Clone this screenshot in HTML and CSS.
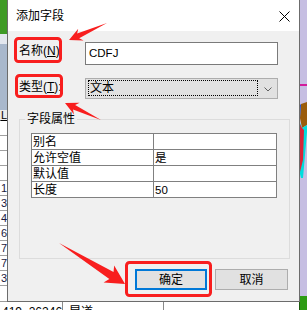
FILE: index.html
```html
<!DOCTYPE html>
<html lang="zh-CN">
<head>
<meta charset="utf-8">
<title>添加字段</title>
<link rel="stylesheet" href="styles.css">
</head>
<body>
<div class="desktop">
  <div class="left-sheet">
    <div class="ls-green"></div>
    <div class="ls-light"></div>
    <div class="ls-blue"></div>
    <div class="ls-head">L</div>
    <div class="ls-row"></div>
    <div class="ls-row"></div>
    <div class="ls-row"></div>
    <div class="ls-row"></div>
    <div class="ls-row">1:</div>
    <div class="ls-row">3</div>
    <div class="ls-row">4</div>
    <div class="ls-row">6</div>
    <div class="ls-row">7</div>
    <div class="ls-row">7</div>
    <div class="ls-row">3</div>
  </div>

  <svg class="right-strip" width="8" height="310" viewBox="0 0 8 310">
    <rect x="0" y="0" width="8" height="310" fill="#c6bee2"/>
    <rect x="0" y="84" width="8" height="2" fill="#d21c9c"/>
    <polygon points="2,104 8,102 8,125 3,128 1,118" fill="#9a5c0c"/>
    <polygon points="0,106 2,104 1,118 0,120" fill="#1c4fd0"/>
    <polygon points="0,120 3,128 8,125 8,132 4,178 2,178 0,170" fill="#00dede"/>
    <polygon points="0,122 3,128 5,130 4,160 1,172 0,172" fill="#d8263a"/>
    <rect x="0" y="296" width="8" height="14" fill="#2e9c14"/>
    <rect x="0" y="296" width="1" height="14" fill="#1a5a0a"/>
  </svg>

  <div class="statusbar">
    <span class="st-cell st-coord">419, 262469</span>
    <span class="st-cell st-name">昆道</span>
  </div>

  <div class="dialog">
    <div class="titlebar">
      <span class="title">添加字段</span>
      <svg class="close" width="11" height="11" viewBox="0 0 11 11">
        <path d="M0.5 0.5 L10.5 10.5 M10.5 0.5 L0.5 10.5" stroke="#000" stroke-width="1" fill="none"/>
      </svg>
    </div>
    <div class="body">
      <div class="row">
        <span class="label">名称(<u>N</u>)</span>
        <div class="textbox">CDFJ</div>
      </div>
      <div class="row row-type">
        <span class="label">类型(<u>T</u>):</span>
        <div class="combo">
          <div class="combo-value">文本</div>
          <div class="combo-arrow">
            <svg width="8" height="5" viewBox="0 0 8 5"><path d="M0.5 0.5 L4 4 L7.5 0.5" stroke="#606060" stroke-width="1" fill="none"/></svg>
          </div>
        </div>
      </div>
      <fieldset class="group">
        <legend>字段属性</legend>
        <table class="props">
          <tr><td class="k">别名</td><td class="v"></td></tr>
          <tr><td class="k">允许空值</td><td class="v">是</td></tr>
          <tr><td class="k">默认值</td><td class="v"></td></tr>
          <tr><td class="k">长度</td><td class="v">50</td></tr>
        </table>
      </fieldset>
      <div class="buttons">
        <div class="btn btn-default">确定</div>
        <div class="btn btn-cancel">取消</div>
      </div>
    </div>
  </div>

  <svg class="annot" width="307" height="310" viewBox="0 0 307 310">
    <g fill="none" stroke="#f81e1e" stroke-width="3">
      <rect x="15.5" y="38.5" width="45" height="23" rx="3"/>
      <rect x="16.5" y="75.5" width="45" height="21" rx="3"/>
      <rect x="126.5" y="262.5" width="84" height="33" rx="3"/>
    </g>
    <g fill="#f81e1e">
      <polygon transform="translate(107 23) rotate(155.9)" points="0,0 31.6,-2.5 28.6,-6.5 41.6,0 28.6,6.5 31.6,2.5"/>
      <polygon transform="translate(101 120) rotate(-154.7)" points="0,0 29.8,-2.5 26.8,-6.5 39.8,0 26.8,6.5 29.8,2.5"/>
      <polygon transform="translate(59 243) rotate(31.8)" points="0,0 61.7,-4 58.7,-10 77.7,0 58.7,10 61.7,4"/>
    </g>
  </svg>
</div>
</body>
</html>
```

FILE: styles.css
```css
* { box-sizing: border-box; }

html, body {
  margin: 0;
  padding: 0;
  background: #c6bee2;
}

.desktop {
  position: relative;
  width: 307px;
  height: 310px;
  overflow: hidden;
  background: #c6bee2;
  font-family: "Liberation Sans", "Noto Sans CJK SC", sans-serif;
  font-size: 12px;
  color: #000;
}

/* background spreadsheet peeking out at the left */
.left-sheet {
  position: absolute;
  left: 0;
  top: 0;
  width: 8px;
  height: 301px;
  background: #ffffff;
  display: flex;
  flex-direction: column;
  overflow: hidden;
  font-size: 11px;
  line-height: 14px;
}
.ls-green { height: 34px; background: #3f9b26; flex: none; }
.ls-light { height: 10px; background: #e3e7ee; flex: none; }
.ls-blue { height: 66px; background: #a9b8cc; flex: none; }
.ls-head {
  height: 11px;
  flex: none;
  background: #ececec;
  border-bottom: 1px solid #5a5a5a;
  line-height: 11px;
  padding-left: 1px;
  text-decoration: underline;
}
.ls-row {
  height: 15px;
  flex: none;
  border-bottom: 1px solid #a0a0a0;
  padding-left: 1px;
  color: #1a1a40;
}

.right-strip {
  position: absolute;
  right: 0;
  top: 0;
  display: block;
}

.statusbar {
  position: absolute;
  left: 0;
  top: 301px;
  width: 299px;
  height: 9px;
  background: #ffffff;
  display: flex;
  overflow: hidden;
  border-top: 1px solid #9a9a9a;
  font-size: 12px;
  line-height: 14px;
}
.st-cell {
  padding: 3px 0 0 2px;
  border-right: 1px solid #8a8a8a;
  white-space: nowrap;
  overflow: hidden;
}
.st-coord { width: 63px; }
.st-name { width: 101px; padding-left: 6px; }

/* dialog window */
.dialog {
  position: absolute;
  left: 7px;
  top: 0;
  width: 293px;
  height: 302px;
  border: 1px solid #6c6c6c;
  border-top: none;
  display: flex;
  flex-direction: column;
  background: #f0f0f0;
  font-family: "Liberation Sans", "Noto Sans CJK SC", sans-serif;
}

.titlebar {
  height: 31px;
  flex: none;
  background: #ffffff;
  display: flex;
  align-items: center;
  justify-content: space-between;
  padding: 0 9px 0 8px;
}
.title {
  font-size: 12px;
  line-height: 16px;
  color: #000;
}
.close { display: block; margin-top: 1px; }

.body {
  flex: 1;
  display: flex;
  flex-direction: column;
  padding: 11px 11px 0 11px;
}

.row {
  display: flex;
  align-items: flex-start;
}
.row-type { margin-top: 13px; }

.label {
  width: 66px;
  flex: none;
  line-height: 16px;
  margin-top: 1px;
  font-size: 12px;
}
.label u { text-decoration: underline; text-underline-offset: 1px; }

.textbox {
  width: 193px;
  height: 23px;
  background: #ffffff;
  border: 1px solid #7a7a7a;
  padding: 0 0 0 3px;
  line-height: 21px;
  font-size: 11.5px;
}

.combo {
  width: 193px;
  height: 21px;
  background: #e1e1e1;
  border: 1px solid #adadad;
  display: flex;
  padding: 1px 0 2px 2px;
}
.combo-value {
  flex: 1;
  border: 1px dotted #000;
  line-height: 15px;
  padding-left: 1px;
}
.combo-arrow {
  width: 19px;
  flex: none;
  display: flex;
  align-items: center;
  justify-content: center;
  padding-left: 1px;
  padding-top: 2px;
}
.combo-arrow svg { display: block; }

.group {
  margin: 12px -2px 0 0;
  padding: 6px 11px 60px 11px;
  border: 1px solid #dcdcdc;
  min-width: 0;
}
.group legend {
  padding: 0 2px;
  margin-left: -6px;
  line-height: 16px;
  font-size: 12px;
}

.props {
  width: 246px;
  border-collapse: collapse;
  background: #ffffff;
  table-layout: fixed;
}
.props td {
  border: 1px solid #808080;
  height: 16px;
  padding: 0 0 0 1px;
  line-height: 14px;
  font-size: 12px;
  vertical-align: middle;
}
.props td.k { width: 122px; }
.props td.v { font-size: 11.5px; }

.buttons {
  display: flex;
  justify-content: flex-end;
  gap: 8px;
  margin-top: 10px;
}
.btn {
  height: 21px;
  background: #e1e1e1;
  border: 1px solid #adadad;
  display: flex;
  align-items: center;
  justify-content: center;
  font-size: 12px;
  line-height: 16px;
}
.btn-default {
  width: 72px;
  border: 2px solid #0078d7;
}
.btn-cancel { width: 73px; }

.annot {
  position: absolute;
  left: 0;
  top: 0;
  display: block;
  pointer-events: none;
}
```
